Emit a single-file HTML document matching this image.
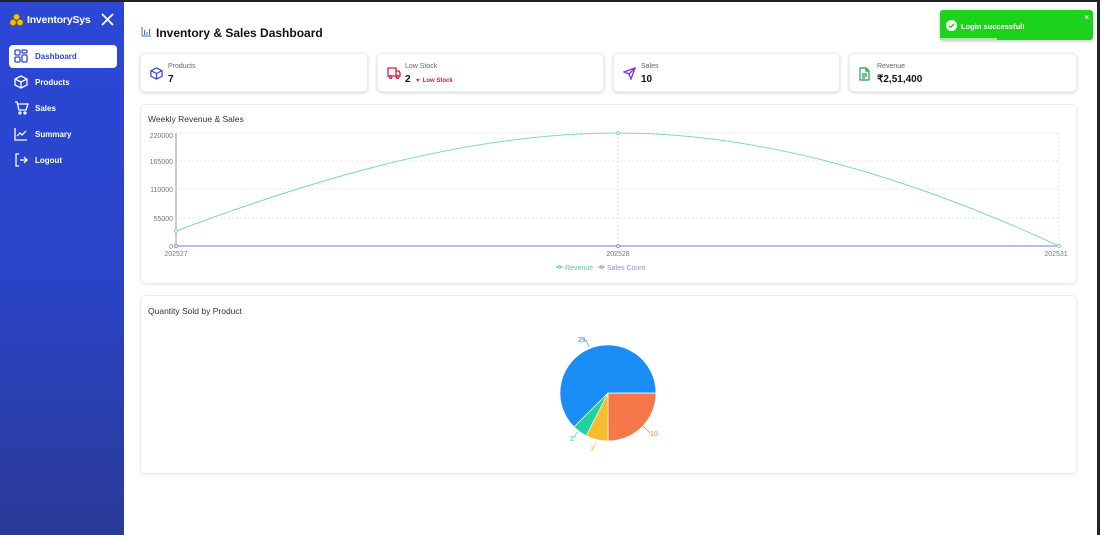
<!DOCTYPE html>
<html><head><meta charset="utf-8"><style>
*{box-sizing:border-box;margin:0;padding:0}
body{width:1100px;height:535px;overflow:hidden;background:#222;font-family:"Liberation Sans",sans-serif;position:relative}
.frame{position:absolute;left:0;top:2px;width:1097px;height:533px;background:#fff;overflow:hidden}
.side{position:absolute;left:0;top:0;width:124px;height:533px;background:linear-gradient(180deg,#2b47d6 0%,#2a44c8 50%,#2a3a98 100%);color:#fff}
.logo{position:absolute;left:9px;top:11px;font-weight:bold;font-size:10.5px;display:flex;align-items:center;gap:3px;letter-spacing:-0.2px}
.nav{position:absolute;left:9px;width:108px;height:23px;display:flex;align-items:center;font-size:8px;font-weight:bold;padding-left:26px}
.nav svg{position:absolute;left:5px;top:4px}
.act{background:#fff;color:#2b47d6;border-radius:4px}
.card{position:absolute;background:#fff;border-radius:5px;box-shadow:0 1px 3px rgba(0,0,0,.18);border:1px solid #eee}
.lbl{font-size:7px;color:#666;position:absolute;left:27px;top:9px}
.val{font-size:10px;font-weight:bold;color:#111;position:absolute;left:27px;top:20px}
.ic{position:absolute;left:9px;top:13px}
</style></head><body><div class="frame">
<div class="side">
<div class="logo"><svg width="15" height="14" viewBox="0 0 15 14"><circle cx="7.5" cy="4" r="3.3" fill="#e8c020" stroke="#6a5a10" stroke-width=".8"/><circle cx="4" cy="9.5" r="3.3" fill="#e8c020" stroke="#6a5a10" stroke-width=".8"/><circle cx="11" cy="9.5" r="3.3" fill="#e8c020" stroke="#6a5a10" stroke-width=".8"/></svg>InventorySys</div>
<svg style="position:absolute;left:101px;top:11px" width="13" height="13" viewBox="0 0 13 13"><path d="M1 1L12 12M12 1L1 12" stroke="#fff" stroke-width="1.8"/></svg>
<div class="nav act" style="top:43px"><svg width="14" height="14" viewBox="0 0 14 14" fill="none" stroke="#2b47d6" stroke-width="1.3"><rect x="1" y="1" width="5" height="5" rx="1"/><rect x="8" y="1" width="5" height="3" rx="1"/><rect x="1" y="8" width="5" height="5" rx="1"/><rect x="8" y="6" width="5" height="7" rx="1"/></svg>Dashboard</div>
<div class="nav" style="top:69px"><svg width="14" height="14" viewBox="0 0 14 14" fill="none" stroke="#fff" stroke-width="1.3"><path d="M7 1L13 4V10L7 13L1 10V4Z M1 4L7 7L13 4 M7 7V13"/></svg>Products</div>
<div class="nav" style="top:95px"><svg width="15" height="14" viewBox="0 0 15 14" fill="none" stroke="#fff" stroke-width="1.3"><path d="M1 1H3L5 9H12L14 3H4"/><circle cx="6" cy="12" r="1"/><circle cx="11" cy="12" r="1"/></svg>Sales</div>
<div class="nav" style="top:121px"><svg width="14" height="14" viewBox="0 0 14 14" fill="none" stroke="#fff" stroke-width="1.3"><path d="M1 1V13H13 M3 9L6 6L8 8L12 4"/></svg>Summary</div>
<div class="nav" style="top:147px"><svg width="14" height="14" viewBox="0 0 14 14" fill="none" stroke="#fff" stroke-width="1.3"><path d="M5 1H2V13H5 M6 7H13 M10 4L13 7L10 10"/></svg>Logout</div>
</div>
<svg style="position:absolute;left:141px;top:25px" width="10" height="10" viewBox="0 0 10 10" fill="none" stroke="#4a6ad8" stroke-width="1"><path d="M1 0V9H10 M3.5 3V8 M6 5V8 M8.5 2V8"/></svg>
<div style="position:absolute;left:156px;top:24px;font-size:12px;font-weight:bold;color:#111">Inventory &amp; Sales Dashboard</div>
<div class="card" style="left:140px;top:51px;width:228px;height:39px"><svg class="ic" width="13" height="13" viewBox="0 0 14 14" fill="none" stroke="#2b47d6" stroke-width="1.3"><path d="M7 1L13 4V10L7 13L1 10V4Z M1 4L7 7L13 4 M7 7V13"/></svg><div class="lbl">Products</div><div class="val">7</div></div>
<div class="card" style="left:377px;top:51px;width:227px;height:39px"><svg class="ic" width="14" height="12" viewBox="0 0 14 12" fill="none" stroke="#d21f3c" stroke-width="1.3"><path d="M1 1H9V9H1Z M9 4H12L13 6V9H9"/><circle cx="3.5" cy="10" r="1.3" fill="#fff"/><circle cx="10.5" cy="10" r="1.3" fill="#fff"/></svg><div class="lbl">Low Stock</div><div class="val">2 <span style="font-size:6px;color:#d21f3c;margin-left:3px">▾ &nbsp;Low Stock</span></div></div>
<div class="card" style="left:613px;top:51px;width:227px;height:39px"><svg class="ic" width="13" height="13" viewBox="0 0 13 13" fill="none" stroke="#8a2be2" stroke-width="1.3"><path d="M12 1L1 5L6 7L8 12Z M12 1L6 7"/></svg><div class="lbl">Sales</div><div class="val">10</div></div>
<div class="card" style="left:849px;top:51px;width:228px;height:39px"><svg class="ic" width="11" height="14" viewBox="0 0 11 14" fill="none" stroke="#22a050" stroke-width="1.2"><path d="M1 1H7L10 4V13H1Z M7 1V4H10 M3 7H8 M3 9H8 M3 11H6"/></svg><div class="lbl">Revenue</div><div class="val">₹2,51,400</div></div>
<div class="card" style="left:140px;top:102px;width:937px;height:180px;box-shadow:0 1px 2px rgba(0,0,0,.08)"></div>
<div style="position:absolute;left:148px;top:112px;font-size:8.5px;color:#333">Weekly Revenue &amp; Sales</div>
<svg style="position:absolute;left:0;top:0" width="1100" height="535" font-family="Liberation Sans" font-size="7" fill="#777">
<g stroke="#e6e6e6" stroke-dasharray="2 2"><line x1="176" y1="131" x2="1059" y2="131"/><line x1="176" y1="159" x2="1059" y2="159"/><line x1="176" y1="187" x2="1059" y2="187"/><line x1="176" y1="216" x2="1059" y2="216"/><line x1="618" y1="131" x2="618" y2="244"/><line x1="1059" y1="131" x2="1059" y2="244"/></g>
<line x1="176" y1="131" x2="176" y2="244" stroke="#999"/><line x1="176" y1="244" x2="1059" y2="244" stroke="#9a8fd0" stroke-width="1.3"/>
<g text-anchor="end"><text x="173" y="136">220000</text><text x="173" y="162">165000</text><text x="173" y="190">110000</text><text x="173" y="219">55000</text><text x="173" y="247">0</text></g>
<g text-anchor="middle"><text x="176" y="254">202527</text><text x="618" y="254">202528</text><text x="1056" y="254">202531</text></g>
<path d="M176,229 C320,175 470,131 618,131 C770,131 920,180 1059,244" fill="none" stroke="#7fd9c0" stroke-width="1"/>
<g fill="#fff" stroke="#7fd9c0"><circle cx="176" cy="229" r="1.5"/><circle cx="618" cy="131" r="1.5"/><circle cx="1059" cy="244" r="1.5"/></g>
<g fill="#fff" stroke="#9a8fd0"><circle cx="176" cy="244" r="1.5"/><circle cx="618" cy="244" r="1.5"/></g>
<line x1="556" y1="265" x2="563" y2="265" stroke="#4fcfa8"/><circle cx="559.5" cy="265" r="1.3" fill="#fff" stroke="#4fcfa8"/>
<text x="565" y="268" fill="#4fcfa8">Revenue</text>
<line x1="598" y1="265" x2="605" y2="265" stroke="#9a8fd0"/><circle cx="601.5" cy="265" r="1.3" fill="#fff" stroke="#9a8fd0"/>
<text x="607" y="268" fill="#9a8fd0">Sales Count</text>
</svg>
<div class="card" style="left:140px;top:293px;width:937px;height:179px;box-shadow:0 1px 2px rgba(0,0,0,.08)"></div>
<div style="position:absolute;left:148px;top:304px;font-size:8.5px;color:#333">Quantity Sold by Product</div>
<svg style="position:absolute;left:0;top:0" width="1100" height="535" font-family="Liberation Sans" font-size="7">
<path d="M608,391 L656,391 A48,48 0 0,1 608,439Z" fill="#f4784a" stroke="#fff" stroke-width=".7"/>
<path d="M608,391 L608,439 A48,48 0 0,1 586.2,433.8Z" fill="#f7bd2e" stroke="#fff" stroke-width=".7"/>
<path d="M608,391 L586.2,433.8 A48,48 0 0,1 574.1,424.9Z" fill="#1ed3a0" stroke="#fff" stroke-width=".7"/>
<path d="M608,391 L574.1,424.9 A48,48 0 1,1 656,391Z" fill="#1a8cf5" stroke="#fff" stroke-width=".7"/>
<path d="M589,345 L586,338 L583,338" stroke="#1a8cf5" fill="none" stroke-width=".6"/><text x="578" y="340" fill="#1a8cf5">25</text>
<path d="M643,424 L650,431" stroke="#f4784a" fill="none" stroke-width=".6"/><text x="650" y="434" fill="#f4784a">10</text>
<path d="M577,430 L574,436" stroke="#1ed3a0" fill="none" stroke-width=".6"/><text x="570" y="439" fill="#1ed3a0">2</text>
<path d="M596,440 L594,446" stroke="#f7bd2e" fill="none" stroke-width=".6"/><text x="590" y="449" fill="#f7bd2e">3</text>
</svg>
<div style="position:absolute;left:940px;top:8px;width:153px;height:30px;background:#1dd21d;border-radius:3px;box-shadow:0 1px 3px rgba(0,0,0,.25);color:#fff;font-size:7.5px;font-weight:bold">
<svg style="position:absolute;left:6px;top:10px" width="11" height="11" viewBox="0 0 11 11"><circle cx="5.5" cy="5.5" r="5.5" fill="#fff"/><path d="M3 5.7L4.8 7.4L8 3.9" stroke="#1dd21d" stroke-width="1.4" fill="none"/></svg>
<span style="position:absolute;left:21px;top:12px">Login successful!</span>
<span style="position:absolute;right:4px;top:3px;font-size:8px">×</span>
<div style="position:absolute;left:0;bottom:0;width:57px;height:2px;background:#9ef09e"></div></div>
</div></body></html>
